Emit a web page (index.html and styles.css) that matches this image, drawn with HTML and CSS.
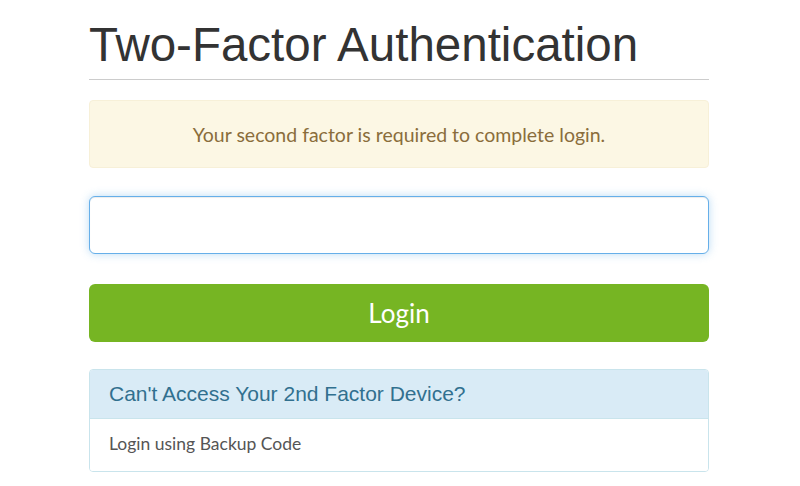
FILE: index.html
```html
<!DOCTYPE html>
<html lang="en">

<head>
    <meta charset="UTF-8">
    <meta name="viewport" content="width=device-width, initial-scale=1.0">
    <title>Two-Factor Authentication</title>
    <link rel="stylesheet" href="styles.css">
</head>

<body>
    <div class="container">
        <h1 class="page-title">Two-Factor Authentication</h1>

        <div class="alert-warning">Your second factor is required to complete login.</div>

        <form class="twofa-form" onsubmit="return false;">
            <input type="text" class="code-input" autocomplete="off">
            <button type="submit" class="login-button">Login</button>
        </form>

        <div class="panel">
            <div class="panel-heading">Can't Access Your 2nd Factor Device?</div>
            <div class="panel-body">Login using Backup Code</div>
        </div>
    </div>
</body>

</html>
```

FILE: styles.css
```css
body {
    margin: 0;
    padding: 0;
    background-color: #fff;
    font-family: 'Liberation Sans', Arial, sans-serif;
    color: #333;
}

.container {
    width: 620px;
    margin: 0 0 0 89px;
}

.page-title {
    font-family: 'Liberation Sans', Arial, sans-serif;
    font-weight: normal;
    font-size: 47.5px;
    line-height: 52px;
    margin: 0;
    padding: 19px 0 8px;
    border-bottom: 1px solid #ccc;
    color: #333;
}

.alert-warning {
    margin-top: 20px;
    height: 66px;
    display: flex;
    align-items: center;
    justify-content: center;
    background-color: #fcf7e4;
    border: 1px solid #f7f0d8;
    border-radius: 4px;
    color: #8a6d3b;
    font-family: Lato, 'Open Sans', sans-serif;
    font-size: 19.5px;
}

.twofa-form {
    display: flex;
    flex-direction: column;
    gap: 30px;
    margin-top: 28px;
}

.code-input {
    box-sizing: border-box;
    height: 58px;
    width: 100%;
    border: 1px solid #66afe9;
    border-radius: 6px;
    box-shadow: 0 0 8px rgba(102, 175, 233, 0.45), inset 0 1px 1px rgba(0, 0, 0, 0.075);
    outline: none;
    font-size: 18px;
    padding: 0 14px;
}

.login-button {
    height: 58px;
    width: 100%;
    border: none;
    border-radius: 6px;
    background-color: #76b523;
    color: #fff;
    font-family: Lato, 'Open Sans', sans-serif;
    font-size: 26px;
    cursor: pointer;
}

.panel {
    margin-top: 27px;
    border: 1px solid #c9e4ec;
    border-radius: 4px;
    overflow: hidden;
}

.panel-heading {
    background-color: #d9ebf6;
    color: #31708f;
    font-size: 21px;
    line-height: 24px;
    padding: 12px 19px;
    border-bottom: 1px solid #c9e4ec;
}

.panel-body {
    background-color: #fff;
    color: #555;
    font-family: Lato, 'Open Sans', sans-serif;
    font-size: 17.5px;
    line-height: 20px;
    padding: 15px 19px 17px;
}
```
